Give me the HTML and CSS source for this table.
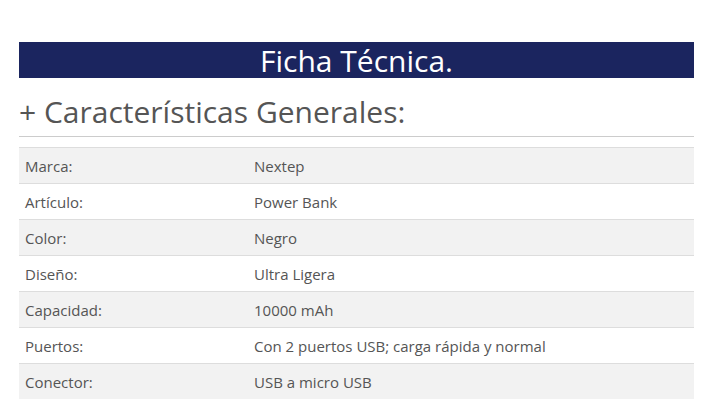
FILE: index.html
```html
<!DOCTYPE html>
<html lang="es">
<head>
<meta charset="utf-8">
<link rel="stylesheet" href="styles.css">
</head>
<body>
<div class="ficha">
  <h1 class="ficha-title">Ficha Técnica.</h1>
  <h2 class="section-title">+ Características Generales:</h2>
  <table class="specs">
    <tr><td class="label">Marca:</td><td>Nextep</td></tr>
    <tr><td class="label">Artículo:</td><td>Power Bank</td></tr>
    <tr><td class="label">Color:</td><td>Negro</td></tr>
    <tr><td class="label">Diseño:</td><td>Ultra Ligera</td></tr>
    <tr><td class="label">Capacidad:</td><td>10000 mAh</td></tr>
    <tr><td class="label">Puertos:</td><td>Con 2 puertos USB; carga rápida y normal</td></tr>
    <tr><td class="label">Conector:</td><td>USB a micro USB</td></tr>
  </table>
</div>
</body>
</html>
```
FILE: styles.css
```css
html, body {
  margin: 0;
  padding: 0;
  background: #fff;
}
body {
  font-family: "Open Sans", "Liberation Sans", sans-serif;
  color: #555;
}
.ficha {
  padding: 42px 15px 0 19px;
}
.ficha-title {
  margin: 0;
  height: 36px;
  line-height: 38px;
  background: #1b255f;
  color: #fff;
  text-align: center;
  font-weight: 400;
  font-size: 30px;
}
.section-title {
  margin: 0;
  padding: 13px 0 4px;
  font-size: 30px;
  font-weight: 400;
  line-height: 41px;
  color: #555;
  border-bottom: 1px solid #ccc;
}
.specs {
  width: 100%;
  margin-top: 10px;
  border-collapse: collapse;
  font-size: 15px;
}
.specs td {
  height: 35px;
  padding: 0 6px;
  border-top: 1px solid #ddd;
  vertical-align: middle;
}
.specs td.label {
  width: 217px;
}
.specs tr:nth-child(odd) {
  background: #f2f2f2;
}
```
